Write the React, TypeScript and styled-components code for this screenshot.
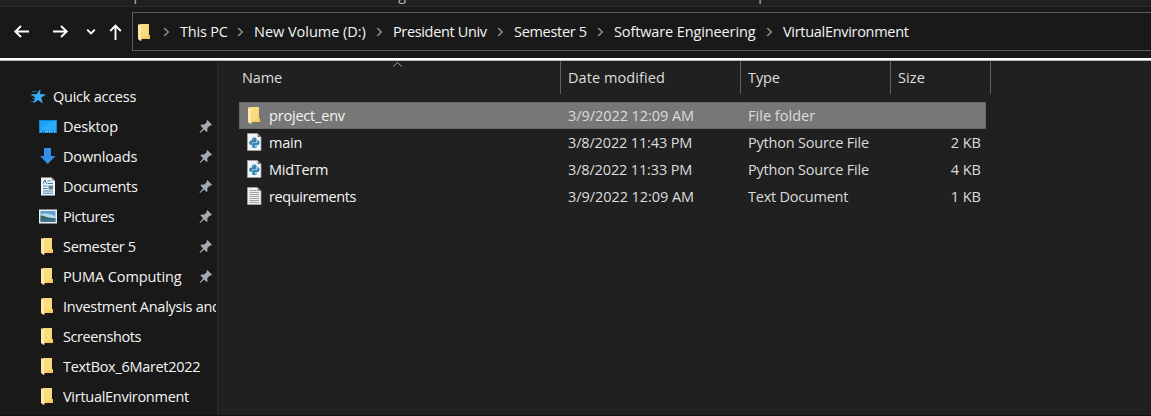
import React from "react";
import styled, { createGlobalStyle } from "styled-components";

const GlobalStyle = createGlobalStyle`
  * { box-sizing: border-box; }
  html, body { margin: 0; background: #1a1a1a; }
  svg { display: block; flex: none; }
`;

const Window = styled.div`
  display: flex;
  flex-direction: column;
  width: 100%;
  height: 416px;
  overflow: hidden;
  background: #191919;
  border-bottom: 1px solid #101010;
  color: #f4f4f4;
  font: 14.5px/20px "Open Sans", "Noto Sans", sans-serif;
  white-space: nowrap;
`;

/* Ribbon: only the descenders of its group labels are visible */
const Ribbon = styled.div`
  display: grid;
  grid-template-columns: 264px 366px 1fr;
  grid-template-rows: 6px;
  align-items: end;
  height: 7px;
  flex: none;
  padding-left: 117px;
  overflow: hidden;
  background: #202020;
  border-bottom: 1px solid #2c2c2c;
`;

const RibbonLabel = styled.span`
  height: 21px;
  line-height: 20px;
  color: #b4b4b4;
`;

const NavBar = styled.div`
  display: flex;
  flex: none;
  align-items: center;
  height: 51px;
  padding: 0 0 2px 13px;
`;

const NavButtons = styled.div`
  display: flex;
  align-items: center;
  width: 119px;
`;

const AddressBar = styled.div`
  display: flex;
  flex: 1;
  align-items: center;
  height: 39px;
  padding-left: 2px;
  border: 1px solid #5c5c5c;
  border-right: 0;
`;

const AddressIcon = styled.span`
  flex: none;
  width: 28px;
`;

const Crumb = styled.div<{ $width: number; $track: number }>`
  display: flex;
  flex: none;
  align-items: center;
  gap: 10px;
  width: ${p => p.$width}px;
  letter-spacing: ${p => p.$track}px;
`;

const Divider = styled.div`
  flex: none;
  height: 3px;
  background: #fff;
  border-bottom: 1px solid #b4b8b4;
`;

const Content = styled.div`
  display: flex;
  flex: 1;
  min-height: 0;
`;

const Sidebar = styled.nav`
  flex: none;
  width: 218px;
  padding-top: 21px;
  border-right: 1px solid #2c2c2c;
`;

const SideItem = styled.div<{ $root?: boolean }>`
  display: flex;
  align-items: center;
  height: 30px;
  padding-left: ${p => (p.$root ? 28 : 38)}px;
  padding-right: 4px;

  svg { margin-bottom: 2px; }
`;

const SideIcon = styled.span`
  flex: none;
  width: 25px;
`;

const Label = styled.span<{ $track?: number }>`
  letter-spacing: ${p => p.$track ?? 0}px;
`;

const SideLabel = styled(Label)`
  flex: 1;
  min-width: 0;
`;

const LongLabel = styled(SideLabel)`
  overflow: hidden;
  margin-right: -3px;
`;

const Main = styled.main`
  flex: 1;
  min-width: 0;
  padding-left: 21px;
  background: #202020;
`;

const HeaderRow = styled.div`
  display: grid;
  grid-template-columns: 322px 180px 150px 100px;
  height: 33px;
`;

const HeaderCell = styled.div`
  position: relative;
  padding: 7px 0 0 7px;
  border-right: 1px solid #606060;
  color: #dedede;

  &:first-child { padding-left: 3px; }
`;

const SortMark = styled.svg`
  position: absolute;
  top: 0;
  left: 153px;
`;

const Files = styled.div`
  width: 747px;
  padding-top: 8px;
`;

const FileRow = styled.div<{ $selected?: boolean }>`
  display: grid;
  grid-template-columns: 329px 180px 150px 1fr;
  align-items: center;
  height: 27px;
  padding-right: 5px;
  background: ${p => (p.$selected ? "#777" : "transparent")};
  box-shadow: ${p => (p.$selected ? "inset 0 0 0 1px #686868" : "none")};
`;

const NameCell = styled.div`
  display: flex;
  align-items: center;
  padding-left: 6px;

  svg { margin-bottom: 2px; }
`;

const FileIcon = styled.span`
  flex: none;
  width: 24px;
`;

const Meta = styled(Label)`
  color: #dcdcdc;
`;

const SizeCell = styled(Meta)`
  text-align: right;
`;

const Arrow = ({ dir }: { dir: "left" | "right" | "up" }) => {
  const d = {
    left: "M16 8.5H2M8 3 2.3 8.5 8 14",
    right: "M1 8.5h14M9 3l5.7 5.5L9 14",
    up: "M8.5 17V2.5M3.2 8l5.3-5.5L13.8 8",
  }[dir];
  return (
    <svg width="17" height="18" viewBox="0 0 17 18" fill="none" stroke="#fff" strokeWidth="1.9">
      <path d={d} />
    </svg>
  );
};

const NavGap = styled.span<{ $w: number }>`
  flex: none;
  width: ${p => p.$w}px;
`;

const DownChevron = () => (
  <svg width="10" height="8" viewBox="0 0 10 8" fill="none" stroke="#fff" strokeWidth="1.9">
    <path d="M1.2 1.7 5 5.5l3.8-3.8" />
  </svg>
);

const CrumbChevron = () => (
  <svg width="7" height="10" viewBox="0 0 7 10" fill="none" stroke="#8e8e8e" strokeWidth="1.5">
    <path d="m1.2 1 4 4-4 4" />
  </svg>
);

const FolderIcon = () => (
  <svg width="17" height="18" viewBox="0 0 17 18">
    <path d="M5 1h9v11h1v4H5z" fill="#f5cc62" />
    <path d="M6 1h7.5v11L8 15z" fill="#fbdc81" />
    <path d="M3 1.3 6.5 2v15.2L5.5 18 3 16z" fill="#ffe9a8" />
    <path d="M13.5 12h1.5v4h-1.5z" fill="#f8c84d" />
  </svg>
);

const StarIcon = () => (
  <svg width="19" height="18" viewBox="0 0 19 18">
    <path d="M4 4.500h5M2.500 8h5M4 11.500h4M3 14.500h4" stroke="#1d6298" strokeWidth="1.200" />
    <path d="m12.300 2-.1 5 5.800.4-4.800 3.200 1.600 5.900-4.600-3.400-5 3.400 2-5.700-4.200-3.500 5.400-.1z" fill="#3daaf3" />
  </svg>
);

const DesktopIcon = () => (
  <svg width="19" height="14" viewBox="0 0 19 14">
    <rect x="1" y="1" width="18" height="13" fill="#1683d2" />
    <rect x="2" y="2" width="16" height="9.500" fill="#19a2f8" />
    <path d="M2 11.500 13 2h5v9.500z" fill="#2badfb" />
    <path d="M2.500 12.700h2M7 12.700h8M16 12.700h1.500" stroke="#d7efff" strokeWidth="1" strokeDasharray="1 1" />
  </svg>
);

const DownloadIcon = () => (
  <svg width="19" height="18" viewBox="0 0 19 18">
    <path d="M6 1h7v8h4.500L9.700 17 2 9h4z" fill="#3290e8" />
  </svg>
);

const DocumentsIcon = () => (
  <svg width="19" height="19" viewBox="0 0 19 19">
    <path d="M3 .5h10.500L17 4v14.500H3z" fill="#f0f3f4" />
    <path d="M13.500.5V4H17z" fill="#a8b1b7" />
    <path d="M5 6.500 6.800 3l1.700 3.500" stroke="#1d6c9e" fill="none" />
    <path d="M9.500 4h3M9.500 6.500H15M5 9h4.500M5 11.500h4.500M5 14h10M5 16.200h10" stroke="#3b84ae" />
    <path d="M10.500 8.500H15v4h-4.500z" fill="#58809a" />
  </svg>
);

const PicturesIcon = () => (
  <svg width="19" height="15" viewBox="0 0 19 15">
    <rect x="1" y=".5" width="18" height="14" fill="#eceff1" />
    <rect x="2.500" y="2" width="15" height="11" fill="#5f9fd6" />
    <path d="M2.500 5.500c4-2 9-1 15 1.500v2h-15z" fill="#b5dced" />
    <path d="M2.500 6.500c3-.3 5 1.500 8 2l7 1v1.500h-15z" fill="#37685d" />
    <path d="M2.500 10.500h15V13h-15z" fill="#3f7394" />
  </svg>
);

const PinIcon = () => (
  <svg width="14" height="15" viewBox="0 0 14 15">
    <path d="m8.300 1 4.700 4.700-1.300 1.100-.8-.2-2.600 2.600.3 2.800-1 1-2.500-2.600L1.200 14 .5 13.500l3.600-4.200-2.700-2.700 1.200-1.200 2.700.2 2.600-2.500-.5-.9z" fill="#a3aab2" />
  </svg>
);

const PythonIcon = () => (
  <svg width="18" height="18" viewBox="0 0 18 18">
    <path d="M2.500.5h10L16 4v13.500H2.500z" fill="#f2f5f7" stroke="#a8a8a8" strokeWidth=".7" />
    <path d="M12.500.5V4H16z" fill="#777" />
    <path d="M7 8V5.800C7 4.700 8 4.500 9.200 4.500s2.300.3 2.300 1.400v2.300c0 1-.6 1.400-1.500 1.400H8.200c-1 0-1.500.6-1.500 1.600v.9h-.9c-1.200 0-1.600-1.200-1.600-2.300S4.800 7.500 5.800 7.500h3.500" fill="#3d80ab" />
    <path d="M12.300 7.300h.7c1.100 0 1.500 1.100 1.500 2.200s-.5 2.500-1.600 2.500H9.500v.5h2.200v1c0 1-1 1.500-2.400 1.500-1.300 0-2.200-.5-2.200-1.500v-2c0-1 .6-1.500 1.500-1.500h2.200c.9 0 1.500-.7 1.500-1.500z" fill="#3288b5" />
    <circle cx="8.200" cy="5.800" r=".5" fill="#fff" />
    <circle cx="10.500" cy="13.600" r=".5" fill="#fff" />
  </svg>
);

const TextIcon = () => (
  <svg width="18" height="18" viewBox="0 0 18 18">
    <path d="M2.500.5h10L16 4v13.500H2.500z" fill="#efefed" stroke="#a8a8a8" strokeWidth=".7" />
    <path d="M12.500.5V4H16z" fill="#888" />
    <path d="M4.500 3.500h7M4.500 5.500H14M4.500 7.500H14M4.500 9.500H14M4.500 11.500H14M4.500 13.500H14M4.500 15.500H14" stroke="#999" strokeWidth=".9" />
  </svg>
);

const crumbs: [string, number, number][] = [
  ["This PC", 74, -0.2],
  ["New Volume (D:)", 139, -0.03],
  ["President Univ", 121, -0.35],
  ["Semester 5", 100, -0.3],
  ["Software Engineering", 169, -0.12],
  ["VirtualEnvironment", 150, -0.3],
];

const places: [string, React.FC, number, boolean][] = [
  ["Desktop", DesktopIcon, -0.15, true],
  ["Downloads", DownloadIcon, -0.15, true],
  ["Documents", DocumentsIcon, -0.35, true],
  ["Pictures", PicturesIcon, -0.38, true],
  ["Semester 5", FolderIcon, -0.3, true],
  ["PUMA Computing", FolderIcon, -0.1, true],
  ["Investment Analysis and", FolderIcon, -0.27, false],
  ["Screenshots", FolderIcon, -0.42, false],
  ["TextBox_6Maret2022", FolderIcon, -0.31, false],
  ["VirtualEnvironment", FolderIcon, -0.28, false],
];

type FileEntry = {
  icon: React.FC;
  name: [string, number];
  date: [string, number];
  type: [string, number];
  size?: string;
};

const files: FileEntry[] = [
  { icon: FolderIcon, name: ["project_env", -0.2], date: ["3/9/2022 12:09 AM", -0.06], type: ["File folder", 0.03] },
  { icon: PythonIcon, name: ["main", -0.2], date: ["3/8/2022 11:43 PM", -0.15], type: ["Python Source File", -0.21], size: "2 KB" },
  { icon: PythonIcon, name: ["MidTerm", -0.27], date: ["3/8/2022 11:33 PM", -0.15], type: ["Python Source File", -0.21], size: "4 KB" },
  { icon: TextIcon, name: ["requirements", -0.42], date: ["3/9/2022 12:09 AM", -0.06], type: ["Text Document", -0.25], size: "1 KB" },
];

export default function App() {
  return (
    <Window>
      <GlobalStyle />
      <Ribbon>
        <RibbonLabel>Clipboard</RibbonLabel>
        <RibbonLabel>Organize</RibbonLabel>
        <RibbonLabel>Open</RibbonLabel>
      </Ribbon>
      <NavBar>
        <NavButtons>
          <Arrow dir="left" />
          <NavGap $w={22} />
          <Arrow dir="right" />
          <NavGap $w={17} />
          <DownChevron />
          <NavGap $w={11} />
          <Arrow dir="up" />
        </NavButtons>
        <AddressBar>
          <AddressIcon>
            <FolderIcon />
          </AddressIcon>
          {crumbs.map(([name, width, track]) => (
            <Crumb key={name} $width={width} $track={track}>
              <CrumbChevron />
              {name}
            </Crumb>
          ))}
        </AddressBar>
      </NavBar>
      <Divider />
      <Content>
        <Sidebar>
          <SideItem $root>
            <SideIcon>
              <StarIcon />
            </SideIcon>
            <SideLabel $track={-0.25}>Quick access</SideLabel>
          </SideItem>
          {places.map(([name, Icon, track, pinned]) => {
            const Text = pinned ? SideLabel : LongLabel;
            return (
              <SideItem key={name}>
                <SideIcon>
                  <Icon />
                </SideIcon>
                <Text $track={track}>{name}</Text>
                {pinned && <PinIcon />}
              </SideItem>
            );
          })}
        </Sidebar>
        <Main>
          <HeaderRow>
            <HeaderCell>
              <Label $track={-0.1}>Name</Label>
              <SortMark width="11" height="7" viewBox="0 0 11 7" fill="none" stroke="#a0a0a0">
                <path d="m1.300 5.500 4.200-4 4.200 4" />
              </SortMark>
            </HeaderCell>
            <HeaderCell>
              <Label $track={0.08}>Date modified</Label>
            </HeaderCell>
            <HeaderCell>
              <Label $track={-0.1}>Type</Label>
            </HeaderCell>
            <HeaderCell>
              <Label $track={0.1}>Size</Label>
            </HeaderCell>
          </HeaderRow>
          <Files>
            {files.map(({ icon: Icon, name, date, type, size }, i) => (
              <FileRow key={name[0]} $selected={i === 0}>
                <NameCell>
                  <FileIcon>
                    <Icon />
                  </FileIcon>
                  <Label $track={name[1]}>{name[0]}</Label>
                </NameCell>
                <Meta $track={date[1]}>{date[0]}</Meta>
                <Meta $track={type[1]}>{type[0]}</Meta>
                <SizeCell>{size}</SizeCell>
              </FileRow>
            ))}
          </Files>
        </Main>
      </Content>
    </Window>
  );
}
